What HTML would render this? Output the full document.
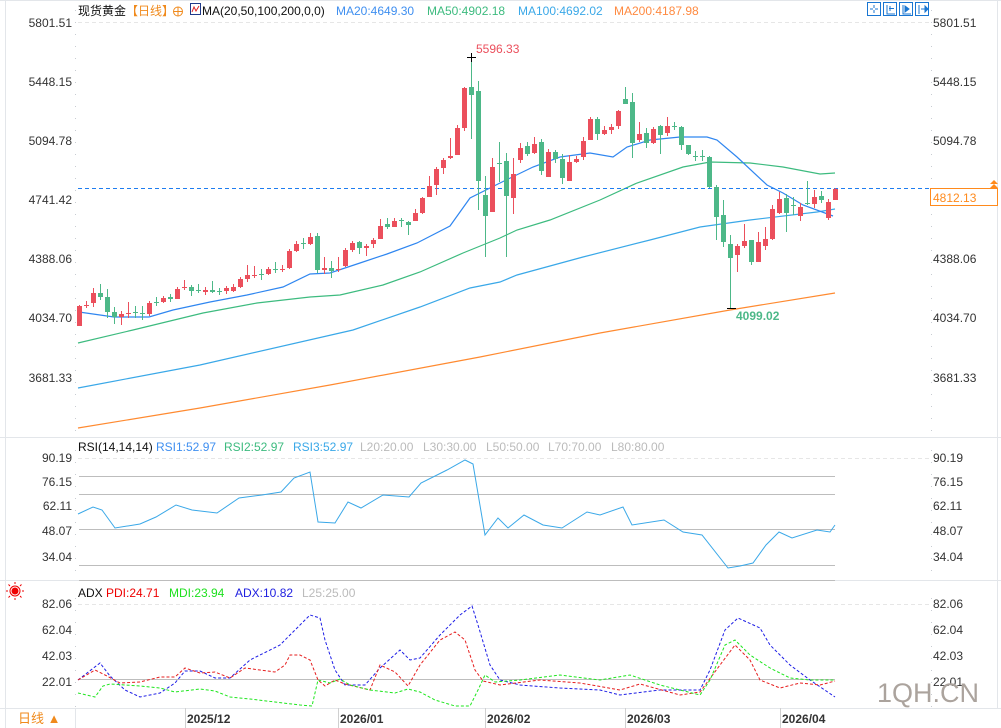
<!DOCTYPE html>
<html><head><meta charset="utf-8"><style>
html,body{margin:0;padding:0;background:#fff;}
body{width:1001px;height:728px;overflow:hidden;position:relative;font-family:"Liberation Sans","Noto Sans CJK SC",sans-serif;}
svg{position:absolute;left:0;top:0;}
</style></head><body>
<svg id="s" width="1001" height="728" xmlns="http://www.w3.org/2000/svg" font-family="Liberation Sans, Noto Sans CJK SC, sans-serif" font-size="12">
<g stroke="#e3e6ea" stroke-width="1" fill="none">
<line x1="0" y1="437.5" x2="1001" y2="437.5"/>
<line x1="0" y1="580.5" x2="1001" y2="580.5"/>
<line x1="0" y1="708.5" x2="1001" y2="708.5"/>
<line x1="5.5" y1="0" x2="5.5" y2="728"/>
<line x1="75.5" y1="708" x2="75.5" y2="728"/>
<line x1="997.5" y1="0" x2="997.5" y2="708"/>
<line x1="0" y1="0.5" x2="1001" y2="0.5"/>
</g>
<g stroke="#c8ccd2" stroke-dasharray="1,11" stroke-width="1">
<line x1="75.5" y1="10" x2="75.5" y2="437"/><line x1="931.5" y1="10" x2="931.5" y2="437"/>
<line x1="75.5" y1="450" x2="75.5" y2="580"/><line x1="931.5" y1="450" x2="931.5" y2="580"/>
<line x1="75.5" y1="598" x2="75.5" y2="708"/><line x1="931.5" y1="598" x2="931.5" y2="708"/>
</g>
<g stroke="#e6e6e6" stroke-dasharray="4,3"><line x1="78" y1="22.5" x2="931" y2="22.5"/><line x1="78" y1="458.5" x2="931" y2="458.5"/><line x1="78" y1="604.5" x2="931" y2="604.5"/></g>
<text x="78" y="15" fill="#111">现货黄金</text>
<text x="126" y="15" fill="#f08a1c">【日线】</text>
<circle cx="178" cy="11.5" r="4.5" fill="none" stroke="#f08a1c"/><line x1="173.5" y1="11.5" x2="182.5" y2="11.5" stroke="#f08a1c"/><line x1="178" y1="7" x2="178" y2="16" stroke="#f08a1c"/>
<rect x="190.5" y="3.5" width="10" height="11" fill="#fff" stroke="#1f3a8a"/><polyline points="192,12 194,7 196,11 199,6" fill="none" stroke="#d22" />
<text x="202" y="15" fill="#111">MA(20,50,100,200,0,0)</text>
<text x="336" y="15" fill="#3f8ff0">MA20:4649.30</text>
<text x="427" y="15" fill="#3dbb7f">MA50:4902.18</text>
<text x="518" y="15" fill="#3aa8e8">MA100:4692.02</text>
<text x="614" y="15" fill="#ff8a40">MA200:4187.98</text>
<g fill="none" stroke="#1976d2"><rect x="867.5" y="2.5" width="13" height="13"/><rect x="883.5" y="2.5" width="13" height="13"/><rect x="899.5" y="2.5" width="13" height="13"/><rect x="915.5" y="2.5" width="13" height="13"/></g>
<g stroke="#1976d2" fill="#1976d2"><path d="M874 5v3M874 10v3M870 9h3M875 9h3" fill="none"/><path d="M887 5v9h8M890 6v5M889 8.5h5" fill="none"/><path d="M903 5v9h8" fill="none"/><path d="M905 6l4 3-4 3z"/><path d="M919 5v9M921 9h5" fill="none"/><path d="M925 6l3 3-3 3z"/></g>
<g fill="#333" text-anchor="end" font-size="12">
<text x="72" y="27">5801.51</text><text x="72" y="86">5448.15</text><text x="72" y="145">5094.78</text><text x="72" y="204">4741.42</text><text x="72" y="263">4388.06</text><text x="72" y="322">4034.70</text><text x="72" y="382">3681.33</text>
<text x="72" y="462">90.19</text><text x="72" y="486">76.15</text><text x="72" y="510">62.11</text><text x="72" y="535">48.07</text><text x="72" y="561">34.04</text>
<text x="72" y="608">82.06</text><text x="72" y="634">62.04</text><text x="72" y="660">42.03</text><text x="72" y="686">22.01</text>
</g>
<g fill="#333" font-size="12">
<text x="933" y="27">5801.51</text><text x="933" y="86">5448.15</text><text x="933" y="145">5094.78</text><text x="933" y="263">4388.06</text><text x="933" y="322">4034.70</text><text x="933" y="382">3681.33</text>
<text x="933" y="462">90.19</text><text x="933" y="486">76.15</text><text x="933" y="510">62.11</text><text x="933" y="535">48.07</text><text x="933" y="561">34.04</text>
<text x="933" y="608">82.06</text><text x="933" y="634">62.04</text><text x="933" y="660">42.03</text><text x="933" y="686">22.01</text>
</g>
<g fill="none" stroke-width="1.2">
<polyline stroke="#ff8a30" points="78,428 200,408 330,385 480,357 600,333 730,310 835,293"/>
<polyline stroke="#3aa8e8" points="78,388 200,365 353,330 420,307 470,288 500,282 517,275 583,257 650,240 700,227 750,220 817,212 835,209"/>
<polyline stroke="#3dbb7f" points="78,343 133,330 203,313 257,303 310,297 340,295 383,285 420,272 463,253 500,238 517,230 550,220 600,200 637,183 683,167 710,162 750,163 783,167 820,174 835,173"/>
<polyline stroke="#2f86f0" points="79,312 114,317 149,317 173,310 210,302 247,295 283,287 310,274 330,273 360,263 387,254 417,243 450,226 470,198 500,183 533,167 560,157 590,153 613,157 627,147 650,140 680,137 707,137 717,140 737,157 767,185 783,193 803,205 833,216"/>
</g>
<line x1="78" y1="188.5" x2="931" y2="188.5" stroke="#1e7df0" stroke-dasharray="4,3"/>
<g id="candles"></g>
<path d="M467 57.5h9M471.5 53v9M727 308.5h9" stroke="#000"/>
<text x="476" y="53" fill="#eb4f5c">5596.33</text>
<text x="736" y="320" fill="#4db888" font-weight="bold">4099.02</text>
<rect x="930.5" y="188.5" width="67" height="17" fill="#fff" stroke="#ff8a1c"/>
<text x="933" y="202" fill="#ff8a1c">4812.13</text>
<path d="M990 184l4-4 4 4zM990 188l4-4 4 4z" fill="#ff8a1c"/>
<text x="78" y="451" fill="#111">RSI(14,14,14)</text>
<text x="156" y="451" fill="#3f8ff0">RSI1:52.97</text>
<text x="224" y="451" fill="#3dbb7f">RSI2:52.97</text>
<text x="293" y="451" fill="#3aa8e8">RSI3:52.97</text>
<text x="360" y="451" fill="#bbb">L20:20.00</text>
<text x="423" y="451" fill="#bbb">L30:30.00</text>
<text x="486" y="451" fill="#bbb">L50:50.00</text>
<text x="548" y="451" fill="#bbb">L70:70.00</text>
<text x="611" y="451" fill="#bbb">L80:80.00</text>
<g stroke="#bdbdbd"><line x1="79" y1="476.5" x2="835" y2="476.5"/><line x1="79" y1="494.5" x2="835" y2="494.5"/><line x1="79" y1="529.5" x2="835" y2="529.5"/><line x1="79" y1="565.5" x2="835" y2="565.5"/><line x1="79" y1="580.5" x2="835" y2="580.5"/></g>
<polyline fill="none" stroke="#3aa8e8" stroke-width="1" points="78,514 93,507 102,510 115,528 140,524 156,517 176,505 192,510 217,513 239,498 262,495 281,492 294,478 310,472 318,522 335,523 348,502 361,508 383,495 409,497 421,483 447,470 465,460 473,464 485,535 498,518 508,528 524,515 543,525 562,528 587,512 600,515 623,507 632,525 664,520 683,532 702,535 728,568 740,566 753,563 766,545 779,532 792,538 817,530 830,532 835,525"/>
<g transform="translate(15,591)" stroke="#e00" fill="none"><circle r="3" fill="#e00"/><circle r="5"/><path d="M-7 0h-2M7 0h2M0-7v-2M0 7v2M-5-5l-1.5-1.5M5 5l1.5 1.5M5-5l1.5-1.5M-5 5l-1.5 1.5"/></g>
<text x="78" y="597" fill="#111">ADX</text>
<text x="106" y="597" fill="#e00">PDI:24.71</text>
<text x="169" y="597" fill="#1ee01e">MDI:23.94</text>
<text x="235" y="597" fill="#1e1ee0">ADX:10.82</text>
<text x="302" y="597" fill="#bbb">L25:25.00</text>
<line x1="78" y1="679.5" x2="835" y2="679.5" stroke="#bdbdbd"/>
<g fill="none" stroke-dasharray="3,2" stroke-width="1">
<polyline stroke="#1e1ee6" points="78,680 100,663 110,676 125,690 140,697 160,693 175,683 185,671 200,671 215,678 230,678 250,660 260,655 280,645 300,625 310,615 320,618 325,640 335,670 345,685 365,685 380,668 400,650 410,660 420,658 440,635 460,615 472,606 478,625 490,665 500,680 520,685 560,688 600,690 620,695 660,690 700,690 710,670 725,630 738,618 760,628 770,645 790,665 810,680 835,697"/>
<polyline stroke="#e61e1e" points="78,680 95,670 105,675 120,683 140,682 160,677 175,677 185,668 200,673 215,672 230,678 245,668 260,670 275,672 285,665 290,655 300,655 310,660 318,680 325,686 335,680 345,684 370,690 380,665 395,672 408,686 420,665 440,640 455,632 465,640 475,670 483,681 500,685 540,680 580,683 620,690 640,684 680,695 700,692 720,665 735,645 750,660 760,680 780,688 800,683 820,685 835,681"/>
<polyline stroke="#1ee61e" points="78,693 95,697 103,686 110,684 140,686 160,688 175,692 200,689 215,691 230,697 250,699 275,702 300,705 312,706 318,680 330,683 340,679 350,685 370,690 395,693 408,689 420,692 435,700 455,706 470,706 478,690 485,675 495,682 520,680 560,675 600,680 630,675 660,685 700,695 710,680 725,645 735,640 750,655 770,668 790,678 810,680 835,680"/>
</g>
<text x="877" y="702" fill="#aba39d" font-size="27">1QH.CN</text>
<text x="18" y="723" fill="#f08a1c" font-size="13">日线 ▲</text>
<g stroke="#d0d0d0"><line x1="185.5" y1="708" x2="185.5" y2="728"/><line x1="338.5" y1="708" x2="338.5" y2="728"/><line x1="485.5" y1="708" x2="485.5" y2="728"/><line x1="625.5" y1="708" x2="625.5" y2="728"/><line x1="780.5" y1="708" x2="780.5" y2="728"/></g>
<g fill="#333" font-weight="bold" font-size="12">
<text x="187" y="723">2025/12</text><text x="340" y="723">2026/01</text><text x="487" y="723">2026/02</text><text x="627" y="723">2026/03</text><text x="782" y="723">2026/04</text>
</g>
</svg>
<script>
var d=[[306,326,1,305,326],[305,306,1,301,308],[293,303,1,288,307],[293,297,0,284,300],[297,312,0,289,318],[312,317,0,307,324],[314,317,1,311,325],[313,314,1,302,318],[312,313,0,306,318],[313,314,0,306,320],[303,314,1,301,316],[302,303,0,297,306],[298,302,1,296,303],[297,299,0,294,302],[289,299,1,287,299],[287,288,1,280,290],[287,291,0,285,296],[290,291,0,284,293],[290,292,1,287,295],[290,292,0,281,293],[291,292,0,288,295],[288,291,1,286,294],[287,291,1,284,292],[279,287,1,277,288],[275,279,1,265,282],[275,276,1,266,278],[274,275,0,269,280],[269,274,1,267,275],[269,270,0,262,273],[269,270,1,265,272],[251,268,1,249,269],[244,251,1,241,252],[243,244,0,238,249],[237,244,1,233,245],[236,270,0,233,273],[268,270,1,257,274],[268,271,0,261,278],[269,270,1,257,272],[250,266,1,248,267],[243,250,1,241,252],[242,248,0,241,254],[246,248,1,244,256],[240,244,1,238,248],[226,239,1,219,239],[224,227,0,218,229],[221,227,1,218,227],[220,221,0,218,227],[222,225,0,221,235],[213,221,1,209,221],[198,213,1,197,214],[186,197,1,176,195],[169,185,1,167,195],[160,168,1,158,174],[156,158,1,138,159],[128,155,1,125,155],[88,128,1,87,131],[87,95,0,57,139],[91,181,0,81,210],[195,216,0,176,257],[167,212,1,158,212],[163,164,0,142,182],[161,196,0,153,257],[174,198,1,158,214],[148,160,1,143,163],[146,154,0,142,156],[144,153,1,137,154],[142,171,0,139,175],[152,177,1,149,177],[152,159,0,150,163],[159,178,0,154,184],[162,181,1,155,181],[159,162,1,156,163],[141,157,1,137,160],[119,140,1,117,140],[119,134,0,117,140],[130,134,1,126,135],[127,130,1,124,134],[111,126,1,110,129],[99,104,0,87,104],[102,143,0,93,158],[134,140,1,122,142],[133,143,0,128,148],[129,143,1,127,144],[126,135,0,125,154],[126,133,1,117,136],[126,127,0,122,130],[127,145,0,126,150],[145,154,0,145,155],[156,157,0,151,161],[156,157,0,150,161],[157,187,0,156,188],[187,217,0,185,240],[215,242,0,200,247],[244,258,0,235,308],[246,255,1,244,272],[241,246,1,224,248],[240,262,0,240,265],[242,262,1,232,262],[239,246,1,227,250],[209,239,1,205,240],[199,213,1,192,214],[198,213,0,194,232],[205,206,0,197,215],[207,216,1,203,221],[203,204,0,181,205],[197,204,1,190,208],[196,200,0,191,203],[202,218,1,199,220],[189,200,1,188,200]];
var g=document.getElementById('candles'),h='';
for(var i=0;i<d.length;i++){var c=d[i],x=79+i*7,col=c[2]?'#eb4f5c':'#4db888';
h+='<line x1="'+(x+0.5)+'" y1="'+c[3]+'" x2="'+(x+0.5)+'" y2="'+c[4]+'" stroke="'+col+'"/>';
h+='<rect x="'+(x-2)+'" y="'+c[0]+'" width="5" height="'+Math.max(1,c[1]-c[0])+'" fill="'+col+'"/>';}
g.innerHTML=h;
</script>
</body></html>
